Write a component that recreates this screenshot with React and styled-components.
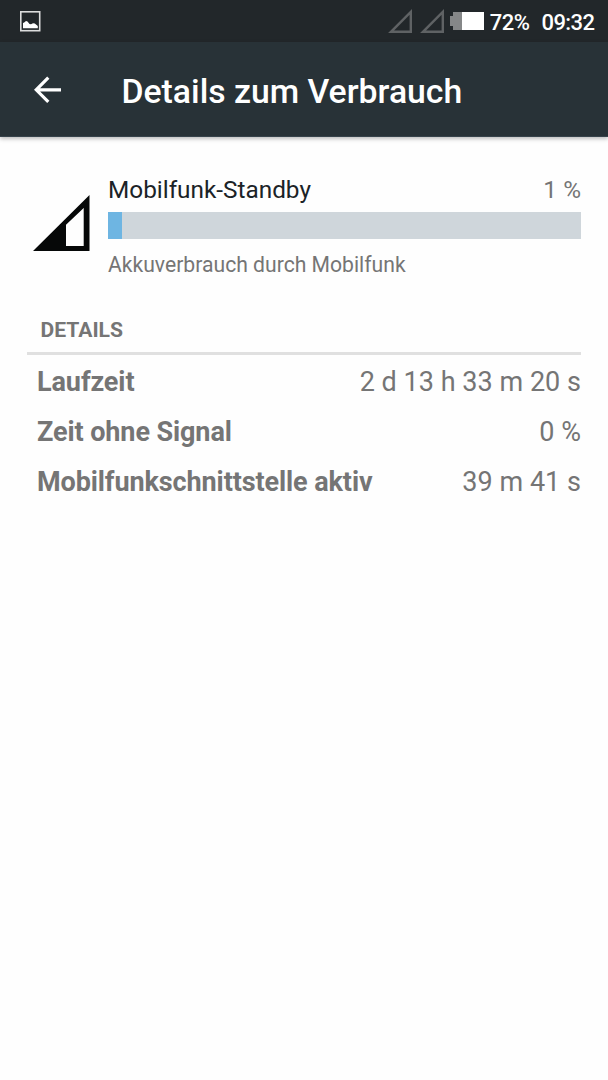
import React from 'react';
import styled, { createGlobalStyle } from 'styled-components';

const GlobalStyle = createGlobalStyle`
  * {
    box-sizing: border-box;
  }
  body {
    margin: 0;
    background-color: #fefefe;
    font-family: Roboto, sans-serif;
    color: #757575;
  }
`

const Container = styled.div`
  width: 100%;
  min-height: 100vh;
`

const StatusBar = styled.div`
  height: 42px;
  padding: 0 13.5px 0 20px;
  display: flex;
  align-items: center;
  justify-content: space-between;
  background-color: #22272a;
  color: #fff;
`

const StatusIcons = styled.div`
  display: flex;
  align-items: center;
`

const Icon = styled.svg`
  display: block;
  flex-shrink: 0;
  margin-right: ${props => props.$gap || 0}px;
`

const StatusText = styled.span`
  font-size: 22px;
  font-weight: 500;
  line-height: 26px;
  padding-top: 3px;
  margin-left: ${props => props.$gap}px;
  letter-spacing: -0.55px;
`

const Toolbar = styled.header`
  height: 95px;
  padding-left: 34px;
  display: flex;
  align-items: center;
  background-color: #283237;
  border-bottom: 1px solid #37434b;
  box-shadow: 0 2px 4px rgba(0, 0, 0, 0.25);
`

const BackButton = styled.button`
  padding: 1px 0 0;
  border: none;
  background: none;
  cursor: pointer;
`

const Title = styled.h1`
  margin: 5px 0 0 59.5px;
  font-size: 33.75px;
  font-weight: 500;
  line-height: 40px;
  color: #fff;
`

const Content = styled.main`
  padding: 38px 27px 0;
`

const Usage = styled.section`
  display: flex;
`

const AppIcon = styled.div`
  width: 81px;
  padding: 20px 0 0 6px;
`

const UsageInfo = styled.div`
  flex: 1;
`

const UsageHeader = styled.div`
  display: flex;
  justify-content: space-between;
  font-size: 24.35px;
  line-height: 30px;
`

const Name = styled.span`
  color: #1b2327;
`

const Track = styled.div`
  height: 27px;
  margin-top: 7px;
  background-color: #cfd6db;
`

const Bar = styled.div`
  width: 14.4px;
  height: 100%;
  background-color: #6eb5e2;
`

const Summary = styled.p`
  margin: 12px 0 0;
  font-size: 21.15px;
  line-height: 28px;
`

const SectionTitle = styled.h2`
  margin: 37px 0 0;
  padding: 0 0 8px 13.5px;
  font-size: 21.1px;
  font-weight: 700;
  line-height: 28px;
  border-bottom: 3px solid #e0e0e0;
`

const Details = styled.div`
  padding-top: 2px;
`

const Row = styled.div`
  height: 49.9px;
  padding-left: 10px;
  display: flex;
  justify-content: space-between;
  align-items: center;
  font-size: 27px;
  line-height: 36px;
`

const Label = styled.span`
  font-weight: 700;
  letter-spacing: -0.1px;
`

const Value = styled.span`
  font-weight: 400;
  letter-spacing: 0.03px;
`

const details = [
  { label: 'Laufzeit', value: '2 d 13 h 33 m 20 s' },
  { label: 'Zeit ohne Signal', value: '0 %' },
  { label: 'Mobilfunkschnittstelle aktiv', value: '39 m 41 s' },
];

const EmptySignal = ({ gap }) => (
  <Icon width="25" height="25" viewBox="0 0 25 25" $gap={gap}>
    <path d="M22.8 3V22.8H3Z" fill="none" stroke="#5f6264" strokeWidth="2.4" />
  </Icon>
);

const App = () => {
  return (
    <>
      <GlobalStyle />
      <Container>
        <StatusBar>
          <Icon width="21" height="21" viewBox="0 0 21 21">
            <rect x="0.8" y="0.8" width="18.9" height="18.9" fill="none" stroke="#dcdddd" strokeWidth="1.6" />
            <path d="M3 17.2V12L4.2 11.4L6 10L7.5 10.4L9.5 13L11 13.3L13 12.3L14.8 12.6L17.8 15V17.2Z" fill="#fff" />
          </Icon>
          <StatusIcons>
            <EmptySignal gap={7} />
            <EmptySignal gap={4} />
            <Icon width="36" height="18" viewBox="0 0 36 18">
              <path d="M4 0H13V18H4V14H1V4H4Z" fill="#858788" />
              <rect x="13" y="0" width="22" height="18" fill="#fff" />
            </Icon>
            <StatusText $gap={5}>72%</StatusText>
            <StatusText $gap={12}>09:32</StatusText>
          </StatusIcons>
        </StatusBar>
        <Toolbar>
          <BackButton aria-label="Zurück">
            <Icon width="28" height="28" viewBox="0 0 28 28">
              <path d="M14.3 1.7L2.2 13.8L14.3 25.9M2.2 13.8H27" fill="none" stroke="#fff" strokeWidth="3.2" />
            </Icon>
          </BackButton>
          <Title>Details zum Verbrauch</Title>
        </Toolbar>
        <Content>
          <Usage>
            <AppIcon>
              <Icon width="57" height="57" viewBox="0 0 57 57">
                <path d="M56.5 0V56H0ZM50.7 13L33 29.8V51H50.7Z" fill="#060808" fillRule="evenodd" />
              </Icon>
            </AppIcon>
            <UsageInfo>
              <UsageHeader>
                <Name>Mobilfunk-Standby</Name>
                <Value>1 %</Value>
              </UsageHeader>
              <Track>
                <Bar />
              </Track>
              <Summary>Akkuverbrauch durch Mobilfunk</Summary>
            </UsageInfo>
          </Usage>
          <SectionTitle>DETAILS</SectionTitle>
          <Details>
            {details.map((item) => (
              <Row key={item.label}>
                <Label>{item.label}</Label>
                <Value>{item.value}</Value>
              </Row>
            ))}
          </Details>
        </Content>
      </Container>
    </>
  );
}

export default App;
